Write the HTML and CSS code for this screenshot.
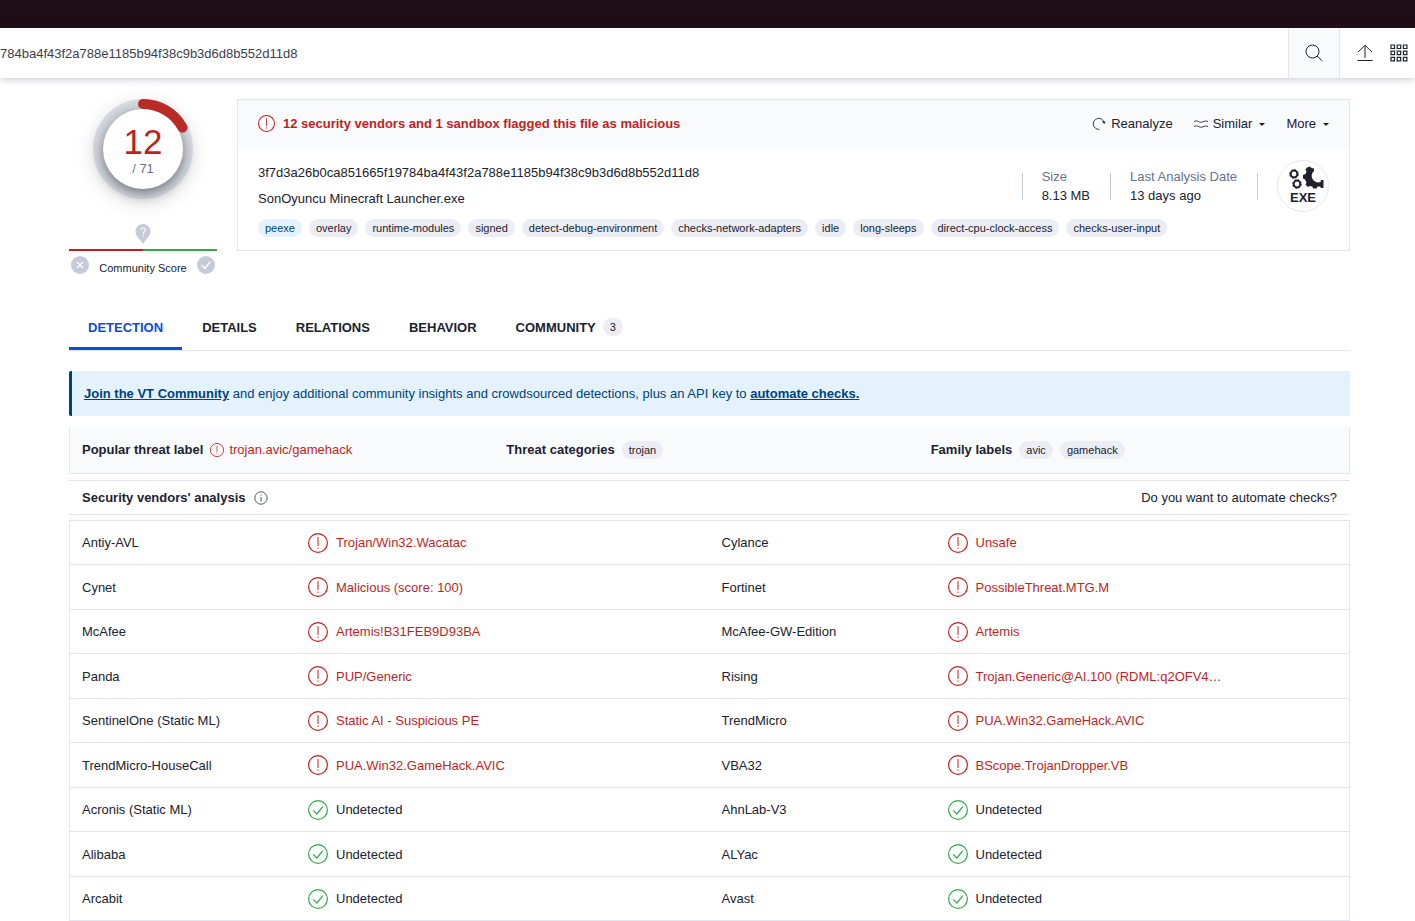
FILE: index.html
```
<!DOCTYPE html>
<html lang="en">
<head>
    <meta charset="UTF-8">
    <meta name="viewport" content="width=device-width, initial-scale=1.0">
    <title>SonOyuncu Minecraft Launcher.exe</title>
    <link rel="stylesheet" href="styles.css">
</head>
<body>
    <!-- Shared icons -->
    <svg class="icon-defs" aria-hidden="true">
        <symbol id="icon-alert" viewBox="0 0 20 20">
            <circle cx="10" cy="10" r="9.4" fill="none" stroke="currentColor" stroke-width="1.2"/>
            <path d="M10 4v9M10 14.5v1.4" fill="none" stroke="currentColor"/>
        </symbol>
        <symbol id="icon-ok" viewBox="0 0 20 20">
            <circle cx="10" cy="10" r="9.4" fill="none" stroke="currentColor" stroke-width="1.2"/>
            <path d="M5.2 10.4l3.6 3.6 6-7.4" fill="none" stroke="currentColor" stroke-width="1.2"/>
        </symbol>
    </svg>

    <div class="top-strip"></div>
    <header class="search-bar">
        <input type="text" class="search-input" aria-label="Search" value="784ba4f43f2a788e1185b94f38c9b3d6d8b552d11d8">
        <button class="search-button" aria-label="Search">
            <svg width="18" height="18" viewBox="0 0 18 18" fill="none" stroke="currentColor"><circle cx="7.5" cy="7.5" r="6.5"/><path d="M12 12l5.3 5"/></svg>
        </button>
        <button class="icon-button" aria-label="Upload">
            <svg width="16" height="18" viewBox="0 0 16 18" fill="none" stroke="currentColor"><path d="M8 14V1.5M1 8l7-6.7L15 8M.5 16.5h15"/></svg>
        </button>
        <button class="icon-button" aria-label="Apps">
            <svg width="18" height="18" viewBox="0 0 18 18" fill="none" stroke="currentColor" stroke-width="1.2"><path d="M1 1h3.5v3.5H1zM7.2 1h3.5v3.5H7.2zM13.4 1h3.5v3.5h-3.5zM1 7.2h3.5v3.5H1zM7.2 7.2h3.5v3.5H7.2zM13.4 7.2h3.5v3.5h-3.5zM1 13.4h3.5v3.5H1zM7.2 13.4h3.5v3.5H7.2zM13.4 13.4h3.5v3.5h-3.5z"/></svg>
        </button>
    </header>

    <main>
        <section class="summary">
            <div class="score">
                <div class="gauge">
                    <svg class="gauge-arc" viewBox="0 0 100 100" fill="none"><path d="M50 5A45 45 0 0 1 89.6 28.6" stroke="#b92b27" stroke-width="10" stroke-linecap="round"/></svg>
                    <div class="gauge-face">
                        <span class="positives">12</span>
                        <span class="total">/ 71</span>
                    </div>
                </div>
                <svg class="pin" width="16" height="20" viewBox="0 0 16 20"><path d="M8 0a7.5 7.5 0 0 1 7.5 7.5C15.5 12 11 15 9 18.8q-1 1.2-2 0C5 15 .5 12 .5 7.5A7.5 7.5 0 0 1 8 0z" fill="#c6cad8"/><path d="M5.9 6.2c0-3 4.3-2.8 4.3-.2 0 1.7-2.1 1.8-2.1 4M8.1 11.5v1.3" fill="none" stroke="#fff" stroke-width="1.1"/></svg>
                <div class="vote-line"></div>
                <div class="votes">
                    <button class="vote" aria-label="Malicious">
                        <svg width="18" height="18" viewBox="0 0 18 18" fill="none" stroke="#fff" stroke-width="1.2"><path d="M6 6l6 6M12 6l-6 6"/></svg>
                    </button>
                    <span>Community Score</span>
                    <button class="vote" aria-label="Harmless">
                        <svg width="18" height="18" viewBox="0 0 18 18" fill="none" stroke="#fff" stroke-width="1.2"><path d="M4.5 9l3.3 3.5 5.7-7"/></svg>
                    </button>
                </div>
            </div>

            <div class="card">
                <div class="card-head">
                    <svg class="icon-medium danger"><use href="#icon-alert"/></svg>
                    <h1>12 security vendors and 1 sandbox flagged this file as malicious</h1>
                    <button class="action">
                        <svg width="14" height="14" viewBox="0 0 14 14" fill="none" stroke="currentColor"><path d="M7.5 12.3A5.5 5.5 0 1 1 12 5.2" stroke-width=".9"/><path d="M9.8 4.6h3.8L12.3 7z" fill="currentColor" stroke="none"/></svg>
                        Reanalyze
                    </button>
                    <button class="action">
                        <svg width="14" height="14" viewBox="0 0 14 14" fill="none" stroke="currentColor" stroke-width=".9"><path d="M0 4.5c4-2 5 2 9 .3 2-.8 3-1 5-.3M0 9.5c4-2 5 2 9 .3 2-.8 3-1 5-.3"/></svg>
                        Similar
                        <span class="caret"></span>
                    </button>
                    <button class="action">
                        More
                        <span class="caret"></span>
                    </button>
                </div>
                <div class="card-body">
                    <div class="file-row">
                        <div class="file-names">
                            <div>3f7d3a26b0ca851665f19784ba4f43f2a788e1185b94f38c9b3d6d8b552d11d8</div>
                            <div>SonOyuncu Minecraft Launcher.exe</div>
                        </div>
                        <span class="divider"></span>
                        <div class="stat"><span>Size</span>8.13 MB</div>
                        <span class="divider"></span>
                        <div class="stat"><span>Last Analysis Date</span>13 days ago</div>
                        <span class="divider"></span>
                        <div class="file-type">
                            <svg width="50" height="50" viewBox="0 0 50 50">
                                <g fill="none" stroke="#20222e">
                                    <circle cx="16" cy="13" r="3.4" stroke-width="2"/>
                                    <circle cx="16" cy="13" r="4.4" stroke-width=".8" stroke-dasharray="1.7 1.75"/>
                                    <circle cx="19" cy="23" r="3.4" stroke-width="2"/>
                                    <circle cx="19" cy="23" r="4.4" stroke-width=".8" stroke-dasharray="1.7 1.75"/>
                                </g>
                                <path d="M29 6.5L32 5.5 33.5 7 36 7.5V10C33.500 12 33 15 34.500 18 36.500 21 39.500 22 42.500 21L43 19H45.500V27H43L42 25.500H39.500L38.500 27.500H35L34.500 25.800 32 25 30 26 27.500 23.500 28.500 21.500 27 18.500 25 17.500V14L27.500 13 28.500 10.500 27.500 8.500Z" fill="#20222e"/>
                                <text x="25" y="41" text-anchor="middle" class="file-ext">EXE</text>
                            </svg>
                        </div>
                    </div>
                    <div class="tags">
                        <a href="#" class="tag tag-blue">peexe</a>
                        <a href="#" class="tag">overlay</a>
                        <a href="#" class="tag">runtime-modules</a>
                        <a href="#" class="tag">signed</a>
                        <a href="#" class="tag">detect-debug-environment</a>
                        <a href="#" class="tag">checks-network-adapters</a>
                        <a href="#" class="tag">idle</a>
                        <a href="#" class="tag">long-sleeps</a>
                        <a href="#" class="tag">direct-cpu-clock-access</a>
                        <a href="#" class="tag">checks-user-input</a>
                    </div>
                </div>
            </div>
        </section>

        <nav class="tabs">
            <a href="#" class="tab active">DETECTION</a>
            <a href="#" class="tab">DETAILS</a>
            <a href="#" class="tab">RELATIONS</a>
            <a href="#" class="tab">BEHAVIOR</a>
            <a href="#" class="tab">COMMUNITY <span class="tag">3</span></a>
        </nav>

        <p class="banner"><a href="#">Join the VT Community</a> and enjoy additional community insights and crowdsourced detections, plus an API key to <a href="#">automate checks.</a></p>

        <section class="threats">
            <div class="threat">
                <strong>Popular threat label</strong>
                <span class="threat-name danger"><svg class="icon-small"><use href="#icon-alert"/></svg>trojan.avic/gamehack</span>
            </div>
            <div class="threat">
                <strong>Threat categories</strong>
                <span class="tag">trojan</span>
            </div>
            <div class="threat">
                <strong>Family labels</strong>
                <span class="tag">avic</span>
                <span class="tag">gamehack</span>
            </div>
        </section>

        <div class="analysis-head">
            <h2>Security vendors' analysis</h2>
            <svg width="14" height="14" viewBox="0 0 14 14" fill="none" stroke="#555a6b"><circle cx="7" cy="7" r="6.2"/><path d="M7 6v4.5M7 3.5v1.3"/></svg>
            <a href="#">Do you want to automate checks?</a>
        </div>

        <table class="vendors">
            <tbody id="vendors"></tbody>
        </table>
    </main>

    <script>
        // Vendor name and verdict, null means undetected
        const results = [
            ['Antiy-AVL', 'Trojan/Win32.Wacatac'],
            ['Cylance', 'Unsafe'],
            ['Cynet', 'Malicious (score: 100)'],
            ['Fortinet', 'PossibleThreat.MTG.M'],
            ['McAfee', 'Artemis!B31FEB9D93BA'],
            ['McAfee-GW-Edition', 'Artemis'],
            ['Panda', 'PUP/Generic'],
            ['Rising', 'Trojan.Generic@AI.100 (RDML:q2OFV4…'],
            ['SentinelOne (Static ML)', 'Static AI - Suspicious PE'],
            ['TrendMicro', 'PUA.Win32.GameHack.AVIC'],
            ['TrendMicro-HouseCall', 'PUA.Win32.GameHack.AVIC'],
            ['VBA32', 'BScope.TrojanDropper.VB'],
            ['Acronis (Static ML)', null],
            ['AhnLab-V3', null],
            ['Alibaba', null],
            ['ALYac', null],
            ['Arcabit', null],
            ['Avast', null]
        ];

        function vendorCells([name, verdict]) {
            return `
                <th scope="row">${name}</th>
                <td>
                    <span class="verdict ${verdict ? 'danger' : ''}">
                        <svg class="icon-large ${verdict ? '' : 'success'}"><use href="#icon-${verdict ? 'alert' : 'ok'}"/></svg>
                        ${verdict || 'Undetected'}
                    </span>
                </td>
            `;
        }

        // Two vendors per row
        let rows = '';
        for (let i = 0; i < results.length; i += 2) {
            rows += `<tr>${vendorCells(results[i])}${vendorCells(results[i + 1])}</tr>`;
        }
        document.getElementById('vendors').innerHTML = rows;
    </script>
</body>
</html>
```
FILE: styles.css
```
:root {
    --text: #20222e;
    --muted: #69728d;
    --border: #e3e6ef;
    --light: #f9fafc;
    --tag: #ecedf4;
    --danger: #c01f1f;
    --success: #35a84a;
    --primary: #0b4dda;
    --navy: #004279;
}

* {
    box-sizing: border-box;
    margin: 0;
    padding: 0;
}

body {
    font-family: "Liberation Sans", Arial, sans-serif;
    font-size: 13px;
    line-height: 19px;
    color: var(--text);
    background: white;
}

svg {
    display: block;
    flex: none;
}

button {
    font: inherit;
    color: inherit;
    border: 0;
    background: none;
    cursor: pointer;
}

a {
    color: inherit;
    text-decoration: none;
}

h1,
h2 {
    font-size: 13px;
}

.icon-defs {
    position: absolute;
    width: 0;
    height: 0;
}

.icon-small {
    width: 14px;
    height: 14px;
}

.icon-medium {
    width: 17px;
    height: 17px;
}

.icon-large {
    width: 20px;
    height: 20px;
}

.danger {
    color: var(--danger);
}

.success {
    color: var(--success);
}

/* Header */
.top-strip {
    height: 28px;
    background: #1f0d16;
}

.search-bar {
    display: flex;
    align-items: center;
    height: 50px;
    padding-right: 7px;
    background: white;
    box-shadow: 0 1px 8px rgba(30, 34, 60, 0.25);
}

.search-input {
    flex: 1;
    height: 50px;
    border: 0;
    outline: 0;
    font: inherit;
    color: #3c3e49;
}

.search-button {
    display: flex;
    align-items: center;
    justify-content: center;
    width: 52px;
    height: 50px;
    border: solid var(--border);
    border-width: 0 1px;
    background: var(--light);
}

.icon-button {
    margin-left: 17px;
}

main {
    padding: 21px 65px 0 69px;
}

/* Score and file summary */
.summary {
    display: flex;
    align-items: flex-start;
    gap: 20px;
}

.score {
    display: flex;
    flex-direction: column;
    align-items: center;
    width: 148px;
}

.gauge {
    position: relative;
    display: flex;
    align-items: center;
    justify-content: center;
    width: 100px;
    height: 100px;
    border-radius: 50%;
    background: #d9dbe4;
    box-shadow: 0 4px 20px rgba(0, 0, 0, 0.12);
}

.gauge-arc {
    position: absolute;
    inset: 0;
    z-index: 1;
}

.gauge-face {
    display: flex;
    flex-direction: column;
    align-items: center;
    justify-content: center;
    width: 80px;
    height: 80px;
    padding-top: 4px;
    border-radius: 50%;
    background: white;
    box-shadow: 0 4px 14px rgba(0, 0, 0, 0.5);
}

.positives {
    font-size: 35px;
    line-height: 34px;
    color: var(--danger);
}

.total {
    font-size: 13px;
    color: var(--muted);
}

.pin {
    margin-top: 25px;
}

.vote-line {
    width: 100%;
    height: 2px;
    margin: 5px 0;
    background: linear-gradient(to right, var(--danger) 50%, var(--success) 50%);
}

.votes {
    display: flex;
    justify-content: space-between;
    width: 100%;
    padding: 0 2px;
    font-size: 11px;
}

.votes span {
    padding-top: 3px;
}

.vote {
    width: 18px;
    height: 18px;
    border-radius: 50%;
    background: #c6cad8;
}

.card {
    flex: 1;
    border: 1px solid var(--border);
}

.card-head {
    display: flex;
    align-items: center;
    height: 47px;
    padding: 0 20px;
    background: var(--light);
}

.card-head h1 {
    flex: 1;
    margin-left: 8px;
    color: var(--danger);
}

.action {
    display: flex;
    align-items: center;
    gap: 5px;
    margin-left: 21px;
}

.caret {
    margin: 2px 0 0 2px;
    border: solid transparent;
    border-width: 3px 3px 0;
    border-top-color: var(--text);
}

.card-body {
    padding: 13px 20px;
}

.file-row {
    display: flex;
    align-items: center;
    gap: 20px;
}

.file-names {
    flex: 1;
    line-height: 26px;
}

.divider {
    width: 1px;
    height: 27px;
    margin-right: -1px;
    background: #c6cad8;
}

.stat span {
    display: block;
    color: var(--muted);
}

.file-type {
    border: 1px solid #e6e7ef;
    border-radius: 50%;
}

.file-ext {
    font-size: 13px;
    font-weight: bold;
    fill: var(--text);
}

.tags {
    display: flex;
    flex-wrap: wrap;
    gap: 7px;
    margin-top: 7px;
}

.tag {
    padding: 0 7px;
    border-radius: 9px;
    font-size: 11px;
    font-weight: normal;
    line-height: 18px;
    background: var(--tag);
}

.tag-blue {
    color: var(--navy);
    background: #e3f2fd;
}

/* Tabs */
.tabs {
    display: flex;
    gap: 1px;
    margin-top: 26px;
    border-bottom: 1px solid var(--border);
}

.tab {
    display: flex;
    align-items: center;
    gap: 7px;
    height: 46px;
    padding: 3px 19px 0;
    border-bottom: 3px solid transparent;
    font-weight: bold;
}

.tab.active {
    color: var(--primary);
    border-bottom-color: var(--primary);
}

.banner {
    margin-top: 20px;
    padding: 13px 12px;
    border-left: 3px solid var(--navy);
    border-radius: 2px;
    color: var(--navy);
    background: #e3f2fd;
}

.banner a {
    font-weight: bold;
    text-decoration: underline;
}

.threats {
    display: grid;
    grid-template-columns: repeat(3, 1fr);
    gap: 18px;
    margin-top: 11px;
    padding: 13px 12px 14px;
    border: 1px solid var(--border);
    border-top: 0;
    background: var(--light);
}

.threat {
    display: flex;
    align-items: center;
    gap: 7px;
}

.threat-name {
    display: flex;
    align-items: center;
    gap: 5px;
}

.analysis-head {
    display: flex;
    align-items: center;
    height: 35px;
    margin: 6px 0 5px;
    padding: 0 13px;
    border: solid var(--border);
    border-width: 1px 0;
}

.analysis-head svg {
    margin-left: 8px;
}

.analysis-head a {
    margin-left: auto;
}

/* Vendor results */
.vendors {
    width: 100%;
    table-layout: fixed;
    border: 1px solid var(--border);
    border-bottom: 0;
    border-spacing: 0;
}

.vendors tr {
    height: 44px;
}

.vendors tr:nth-child(even) {
    height: 45px;
}

.vendors th,
.vendors td {
    border-bottom: 1px solid var(--border);
    text-align: left;
}

.vendors th {
    width: 238px;
    padding-left: 12px;
    font-weight: normal;
}

.verdict {
    display: flex;
    align-items: center;
    gap: 8px;
}
```
